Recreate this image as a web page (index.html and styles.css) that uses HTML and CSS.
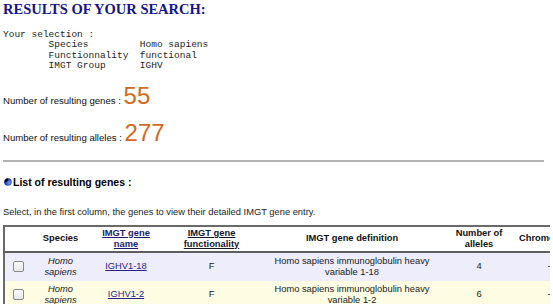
FILE: index.html
```html
<!DOCTYPE html>
<html>
<head>
    <link rel="stylesheet" href="styles.css">
</head>
<body>
    <h1 class="title">RESULTS OF YOUR SEARCH:</h1>

<pre class="selection">Your selection :
        Species         Homo sapiens
        Functionnality  functional
        IMGT Group      IGHV</pre>

    <p class="count">Number of resulting genes : <span class="count-num">55</span></p>
    <p class="count">Number of resulting alleles : <span class="count-num">277</span></p>

    <hr class="rule">

    <h2 class="list-title">
        <svg class="bullet" width="8" height="8" viewBox="0 0 8 8">
            <defs>
                <radialGradient id="ball" cx="0.65" cy="0.6" r="0.6">
                    <stop offset="0" stop-color="#6f9bff"/>
                    <stop offset="1" stop-color="#0b2a96"/>
                </radialGradient>
            </defs>
            <circle cx="4" cy="4" r="3.8" fill="url(#ball)"/>
            <path d="M0.6 4.2 A3.4 3.4 0 0 1 4.2 0.6 L4.2 2.4 A1.8 1.8 0 0 0 2.4 4.2 Z" fill="#000"/>
        </svg>List of resulting genes :
    </h2>

    <p class="hint">Select, in the first column, the genes to view their detailed IMGT gene entry.</p>

    <table class="genes">
        <thead>
            <tr>
                <th class="col-check"></th>
                <th class="col-species">Species</th>
                <th class="col-name"><a href="#" class="sort-link">IMGT gene name</a></th>
                <th class="col-func"><a href="#" class="sort-link dark">IMGT gene functionality</a></th>
                <th class="col-def">IMGT gene definition</th>
                <th class="col-alleles">Number of alleles</th>
                <th class="col-chrom">Chromosome</th>
            </tr>
        </thead>
        <tbody>
            <tr class="row-odd">
                <td><input type="checkbox" class="pick"></td>
                <td class="species">Homo sapiens</td>
                <td><a href="#" class="gene-link">IGHV1-18</a></td>
                <td>F</td>
                <td>Homo sapiens immunoglobulin heavy variable 1-18</td>
                <td>4</td>
                <td>-</td>
            </tr>
            <tr class="row-even">
                <td><input type="checkbox" class="pick"></td>
                <td class="species">Homo sapiens</td>
                <td><a href="#" class="gene-link">IGHV1-2</a></td>
                <td>F</td>
                <td>Homo sapiens immunoglobulin heavy variable 1-2</td>
                <td>6</td>
                <td>-</td>
            </tr>
            <tr class="row-odd">
                <td><input type="checkbox" class="pick"></td>
                <td class="species">Homo sapiens</td>
                <td><a href="#" class="gene-link">IGHV1-24</a></td>
                <td>F</td>
                <td>Homo sapiens immunoglobulin heavy variable 1-24</td>
                <td>1</td>
                <td>-</td>
            </tr>
        </tbody>
    </table>
</body>
</html>
```

FILE: styles.css
```css
html {
    overflow: hidden;
}

body {
    margin: 0 3px;
    font-family: "Liberation Sans", Arial, sans-serif;
    font-size: 9.33px;
    color: #111;
    background: #fff;
}

.title {
    margin: 1px 0 0;
    font-family: "Liberation Serif", "Times New Roman", serif;
    font-size: 14.5px;
    line-height: 17px;
    font-weight: bold;
    color: #14148c;
}

.selection {
    margin: 12px 0 10.3px;
    font-family: "Liberation Mono", "Courier New", monospace;
    font-size: 9.5px;
    line-height: 10.4px;
    color: #222;
}

.count {
    margin: 9.5px 0;
    font-size: 9.6px;
}

.count-num {
    font-size: 24px;
    color: #d2691e;
}

.rule {
    height: 0;
    border: 0;
    border-top: 2px solid #b2b2b2;
    margin: 12.5px 6px 0 0;
}

.list-title {
    margin: 14.4px 0 0;
    font-size: 10.5px;
    line-height: 12px;
    font-weight: bold;
    color: #000;
}

.bullet {
    display: inline-block;
    vertical-align: baseline;
    margin: 0 1px 0 1px;
}

.hint {
    margin: 18.9px 0 6.7px;
    line-height: 11px;
    color: #222;
}

.genes {
    table-layout: fixed;
    width: 578px;
    border-collapse: collapse;
    border-top: 2px solid #6a6a6a;
    border-left: 2px solid #6a6a6a;
    line-height: 11px;
}

.genes th {
    padding: 1px 4px;
    font-weight: bold;
    text-align: center;
    vertical-align: middle;
    background: #fff;
    color: #111;
    border-bottom: 2px solid #5e5e5e;
}

.genes td {
    padding: 3px 4px;
    text-align: center;
    vertical-align: middle;
    color: #1a1a1a;
}

.col-check { width: 18px; }
.col-species { width: 51px; }
.col-name { width: 64px; }
.col-func { width: 91px; }
.col-def { width: 174px; }
.col-alleles { width: 64px; }
.col-chrom { width: 60px; }

.row-odd { background: #ededfb; }
.row-even { background: #fefde3; }

.species {
    font-style: italic;
}

.sort-link {
    color: #1c1c6e;
    text-decoration: underline;
}

.sort-link.dark {
    color: #151530;
}

.gene-link {
    color: #23238a;
    text-decoration: underline;
}

.pick {
    appearance: none;
    -webkit-appearance: none;
    display: block;
    width: 11px;
    height: 11px;
    margin: 0 auto;
    border: 1px solid #8a8a8a;
    border-radius: 2px;
    background: linear-gradient(#fcfcfc, #e6e6e6);
}
```
